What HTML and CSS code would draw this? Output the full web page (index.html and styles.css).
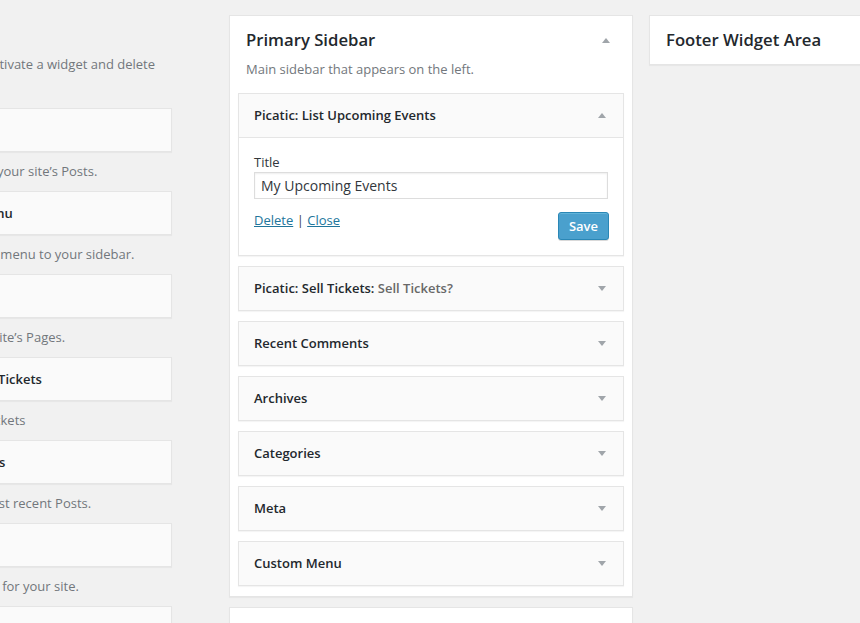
FILE: index.html
```html
<!DOCTYPE html>
<html lang="en">
<head>
<meta charset="utf-8">
<title>Widgets</title>
<link rel="stylesheet" href="styles.css">
</head>
<body>
<div class="page">
  <div class="available">
    <div class="available-inner">
      <p class="intro">To deactivate a widget and delete</p>
      <div class="avail-widget"><h4 class="avail-title">Calendar</h4></div>
      <p class="avail-desc">A calendar of your site’s Posts.</p>
      <div class="avail-widget"><h4 class="avail-title">Custom Menu</h4></div>
      <p class="avail-desc">Add a custom menu to your sidebar.</p>
      <div class="avail-widget"><h4 class="avail-title">Pages</h4></div>
      <p class="avail-desc">A list of your site’s Pages.</p>
      <div class="avail-widget"><h4 class="avail-title">Picatic: Sell Tickets</h4></div>
      <p class="avail-desc">Picatic: Sell Tickets</p>
      <div class="avail-widget"><h4 class="avail-title">Recent Posts</h4></div>
      <p class="avail-desc">Your site’s most recent Posts.</p>
      <div class="avail-widget"><h4 class="avail-title">Search</h4></div>
      <p class="avail-desc">A search <span class="hl">form</span> for your site.</p>
      <div class="avail-widget"><h4 class="avail-title">Text</h4></div>
    </div>
  </div>

  <div class="sidebars">
    <div class="sidebar">
      <div class="sidebar-head sidebar-head--desc">
        <h2 class="sidebar-title">Primary Sidebar</h2>
        <span class="arrow arrow-up"></span>
      </div>
      <p class="sidebar-desc">Main sidebar that appears on the left.</p>
      <div class="widget-list">
        <div class="widget">
          <div class="widget-top">
            <h3 class="widget-title">Picatic: List Upcoming Events</h3>
            <span class="arrow arrow-up"></span>
          </div>
          <div class="widget-inside">
            <label class="field-label" for="title">Title</label>
            <input class="field-input" id="title" type="text" value="My Upcoming Events">
            <div class="widget-actions">
              <div class="links"><a href="#">Delete</a> <span class="sep">|</span> <a href="#">Close</a></div>
              <button class="btn-primary" type="button">Save</button>
            </div>
          </div>
        </div>
        <div class="widget">
          <div class="widget-top">
            <h3 class="widget-title">Picatic: Sell Tickets: <span class="in-title">Sell Tickets?</span></h3>
            <span class="arrow arrow-down"></span>
          </div>
        </div>
        <div class="widget">
          <div class="widget-top">
            <h3 class="widget-title">Recent Comments</h3>
            <span class="arrow arrow-down"></span>
          </div>
        </div>
        <div class="widget">
          <div class="widget-top">
            <h3 class="widget-title">Archives</h3>
            <span class="arrow arrow-down"></span>
          </div>
        </div>
        <div class="widget">
          <div class="widget-top">
            <h3 class="widget-title">Categories</h3>
            <span class="arrow arrow-down"></span>
          </div>
        </div>
        <div class="widget">
          <div class="widget-top">
            <h3 class="widget-title">Meta</h3>
            <span class="arrow arrow-down"></span>
          </div>
        </div>
        <div class="widget">
          <div class="widget-top">
            <h3 class="widget-title">Custom Menu</h3>
            <span class="arrow arrow-down"></span>
          </div>
        </div>
      </div>
    </div>
    <div class="sidebar sidebar--next"></div>
  </div>

  <div class="sidebars sidebars--right">
    <div class="sidebar sidebar--footer">
      <div class="sidebar-head">
        <h2 class="sidebar-title">Footer Widget Area</h2>
        <span class="arrow arrow-down"></span>
      </div>
    </div>
  </div>
</div>
</body>
</html>
```

FILE: styles.css
```css
html, body {
  margin: 0;
  padding: 0;
}

body {
  background: #f1f1f1;
  font-family: "Open Sans", "Liberation Sans", sans-serif;
  font-size: 13px;
  color: #23282d;
  overflow: hidden;
  height: 623px;
}

.page {
  display: flex;
  align-items: flex-start;
  height: 623px;
  overflow: hidden;
}

/* Available widgets (clipped at the left edge) */
.available {
  flex: none;
  width: 229px;
  overflow: hidden;
}

.available-inner {
  margin-left: -91px;
  width: 263px;
}

.intro {
  margin: 55px 0 34px;
  white-space: nowrap;
  text-align: right;
  width: 246px;
  line-height: 19px;
  color: #72777c;
}

.avail-widget {
  height: 44px;
  box-sizing: border-box;
  border: 1px solid #e5e5e5;
  background: #fafafa;
  box-shadow: 0 1px 1px rgba(0, 0, 0, 0.04);
  display: flex;
  align-items: center;
}

.avail-title {
  margin: 0;
  padding: 0 15px;
  font-size: 13px;
  font-weight: 600;
  color: #23282d;
  white-space: nowrap;
}

.avail-desc {
  margin: 0;
  padding: 10px 0 10px 5px;
  line-height: 19px;
  color: #72777c;
  white-space: nowrap;
}

.hl {
  color: #0073aa;
}

/* Sidebars */
.sidebars {
  flex: none;
  width: 404px;
  margin-top: 15px;
  display: flex;
  flex-direction: column;
  gap: 10px;
}

.sidebars--right {
  margin-left: 16px;
}

.sidebar {
  box-sizing: border-box;
  background: #fff;
  border: 1px solid #e5e5e5;
  box-shadow: 0 1px 1px rgba(0, 0, 0, 0.04);
}

.sidebar--next {
  height: 40px;
}

.sidebar-head {
  display: flex;
  align-items: center;
  justify-content: space-between;
  padding: 10px 22px 10px 16px;
}

.sidebar-head--desc {
  padding-bottom: 0;
}

.sidebar-title {
  margin: 0;
  font-size: 16.7px;
  font-weight: 600;
  line-height: 28px;
  color: #23282d;
}

.sidebar-desc {
  margin: 6px 0 14px;
  padding: 0 16px;
  line-height: 19px;
  color: #72777c;
}

.widget-list {
  display: flex;
  flex-direction: column;
  gap: 10px;
  padding: 0 8px 10px;
}

.widget {
  border: 1px solid #e5e5e5;
  background: #fff;
  box-shadow: 0 1px 1px rgba(0, 0, 0, 0.04);
}

.widget-top {
  display: flex;
  align-items: center;
  justify-content: space-between;
  height: 43px;
  padding: 0 17px 0 15px;
  background: #fafafa;
}

.widget-title {
  margin: 0;
  font-size: 13px;
  font-weight: 600;
  line-height: 19px;
  color: #23282d;
}

.in-title {
  color: #686868;
}

.arrow {
  width: 0;
  height: 0;
  border-left: 4.5px solid transparent;
  border-right: 4.5px solid transparent;
}

.arrow-up {
  border-bottom: 5px solid #a0a5aa;
}

.arrow-down {
  border-top: 5px solid #a0a5aa;
}

.widget-inside {
  border-top: 1px solid #e5e5e5;
  padding: 14px 15px 15px;
  display: flex;
  flex-direction: column;
}

.field-label {
  line-height: 20px;
  font-size: 13px;
  color: #32373c;
}

.field-input {
  box-sizing: border-box;
  height: 27px;
  width: 100%;
  margin: 0;
  padding: 0 6px;
  border: 1px solid #ddd;
  box-shadow: inset 0 1px 2px rgba(0, 0, 0, 0.07);
  font-family: "Open Sans", "Liberation Sans", sans-serif;
  font-size: 14px;
  color: #32373c;
  background: #fff;
}

.widget-actions {
  display: flex;
  justify-content: space-between;
  align-items: flex-start;
  margin-top: 11px;
}

.links {
  line-height: 20px;
  color: #32373c;
}

.links a {
  color: #21759b;
  text-decoration: underline;
}

.sep {
  color: #444;
}

.btn-primary {
  margin-top: 2px;
  margin-right: -1px;
  height: 28px;
  padding: 0 10px;
  border: 1px solid #2a87b6;
  border-radius: 3px;
  background: #4aa0cd;
  box-shadow: inset 0 1px 0 rgba(120, 200, 230, 0.5), 0 1px 0 rgba(0, 0, 0, 0.15);
  color: #fff;
  font-family: "Open Sans", "Liberation Sans", sans-serif;
  font-size: 13px;
  font-weight: 600;
  line-height: 26px;
}
```
